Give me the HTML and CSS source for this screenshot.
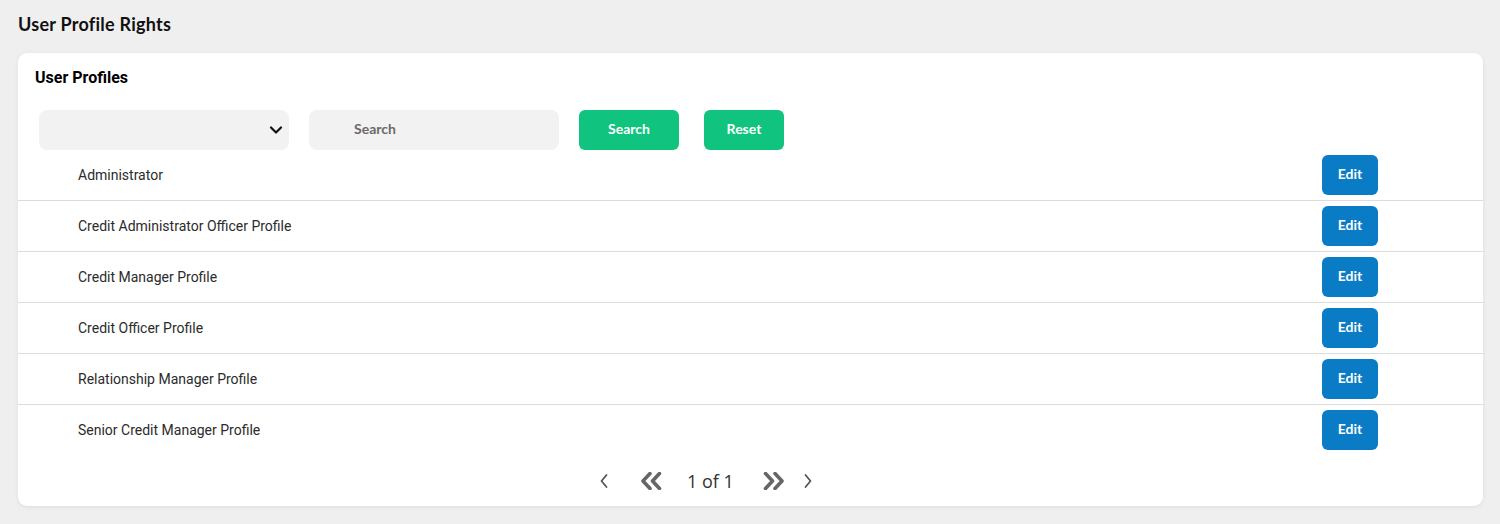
FILE: index.html
```html
<!DOCTYPE html>
<html lang="en">
<head>
  <meta charset="UTF-8">
  <title>User Profile Rights</title>
  <link rel="stylesheet" href="styles.css">
</head>
<body>
<h1 class="page-title">User Profile Rights</h1>

<div class="card">
  <h2 class="card-title">User Profiles</h2>

  <div class="toolbar">
    <div class="select-box">
      <svg class="chevron" width="14" height="10" viewBox="0 0 14 10">
        <path d="M2 2.5 L7 7.5 L12 2.5" fill="none" stroke="#111" stroke-width="2.2" stroke-linecap="round" stroke-linejoin="round"/>
      </svg>
    </div>
    <input class="search-input" type="text" placeholder="Search">
    <button class="btn btn-green btn-search">Search</button>
    <button class="btn btn-green btn-reset">Reset</button>
  </div>

  <div class="profile-list">
    <div class="profile-row"><span>Administrator</span><button class="btn btn-edit">Edit</button></div>
    <div class="profile-row"><span>Credit Administrator Officer Profile</span><button class="btn btn-edit">Edit</button></div>
    <div class="profile-row"><span>Credit Manager Profile</span><button class="btn btn-edit">Edit</button></div>
    <div class="profile-row"><span>Credit Officer Profile</span><button class="btn btn-edit">Edit</button></div>
    <div class="profile-row"><span>Relationship Manager Profile</span><button class="btn btn-edit">Edit</button></div>
    <div class="profile-row"><span>Senior Credit Manager Profile</span><button class="btn btn-edit">Edit</button></div>
  </div>

  <div class="pager">
    <svg class="pg-prev" width="8" height="16" viewBox="0 0 8 16">
      <path d="M6.5 2 L1.5 8 L6.5 14" fill="none" stroke="#555" stroke-width="1.8" stroke-linecap="round" stroke-linejoin="round"/>
    </svg>
    <svg class="pg-first" width="22" height="18" viewBox="0 0 22 18">
      <path d="M10 1.5 L3 9 L10 16.5 M19.5 1.5 L12.5 9 L19.5 16.5" fill="none" stroke="#666" stroke-width="3.6" stroke-linecap="round" stroke-linejoin="round"/>
    </svg>
    <span class="pg-text">1 of 1</span>
    <svg class="pg-last" width="22" height="18" viewBox="0 0 22 18">
      <path d="M2.5 1.5 L9.5 9 L2.5 16.5 M12 1.5 L19 9 L12 16.5" fill="none" stroke="#666" stroke-width="3.6" stroke-linecap="round" stroke-linejoin="round"/>
    </svg>
    <svg class="pg-next" width="8" height="16" viewBox="0 0 8 16">
      <path d="M1.5 2 L6.5 8 L1.5 14" fill="none" stroke="#555" stroke-width="1.8" stroke-linecap="round" stroke-linejoin="round"/>
    </svg>
  </div>
</div>
</body>
</html>
```

FILE: styles.css
```css
body {
  margin: 0;
  padding: 0 17px 18px 18px;
  background: #efefef;
  font-family: Roboto, "Noto Sans", sans-serif;
  color: #333;
}

.page-title {
  margin: 0;
  height: 53px;
  line-height: 48px;
  font-family: Lato, "Noto Sans", sans-serif;
  font-size: 18px;
  letter-spacing: 0.25px;
  font-weight: 700;
  color: #111;
}

.card {
  background: #fff;
  border-radius: 9px;
  box-shadow: 0 1px 4px rgba(0, 0, 0, 0.08);
  height: 453px;
}

.card-title {
  margin: 0;
  padding: 17px 17px 0;
  height: 40px;
  line-height: 16px;
  font-size: 16px;
  font-weight: 700;
  color: #000;
}

.toolbar {
  display: flex;
  align-items: center;
  padding-left: 21px;
  height: 40px;
}

.select-box {
  width: 250px;
  height: 40px;
  border-radius: 8px;
  background: #f2f2f2;
  display: flex;
  align-items: center;
  justify-content: flex-end;
  padding-right: 6px;
  box-sizing: border-box;
}

.search-input {
  width: 250px;
  height: 40px;
  margin-left: 20px;
  border: none;
  border-radius: 8px;
  background: #f2f2f2;
  padding: 0 0 3px 45px;
  box-sizing: border-box;
  font-family: Lato, sans-serif;
  font-size: 14px;
  font-weight: 700;
  outline: none;
}

.search-input::placeholder {
  color: #6a6a6a;
}

.btn {
  border: none;
  border-radius: 6px;
  color: #fff;
  font-family: Lato, sans-serif;
  font-size: 14px;
  font-weight: 700;
  height: 40px;
  padding: 0 0 3px;
  cursor: pointer;
}

.btn-green {
  background: #10c37e;
}

.btn-search {
  width: 100px;
  margin-left: 20px;
}

.btn-reset {
  width: 80px;
  margin-left: 25px;
}

.profile-row {
  display: flex;
  align-items: center;
  justify-content: space-between;
  height: 50px;
  padding: 0 105px 0 60px;
  border-bottom: 1px solid #dcdcdc;
  font-size: 14px;
  color: #2b2b2b;
}

.profile-row:last-child {
  border-bottom: none;
}

.btn-edit {
  width: 56px;
  background: #0a7bc5;
}

.pager {
  height: 51px;
  display: flex;
  align-items: center;
  justify-content: center;
  padding-right: 89px;
}

.pg-prev {
  margin-right: 32px;
}

.pg-first {
  margin-right: 25px;
}

.pg-text {
  font-family: "Open Sans", sans-serif;
  font-size: 18px;
  color: #333;
  margin-right: 29px;
}

.pg-last {
  margin-right: 19px;
}
```
